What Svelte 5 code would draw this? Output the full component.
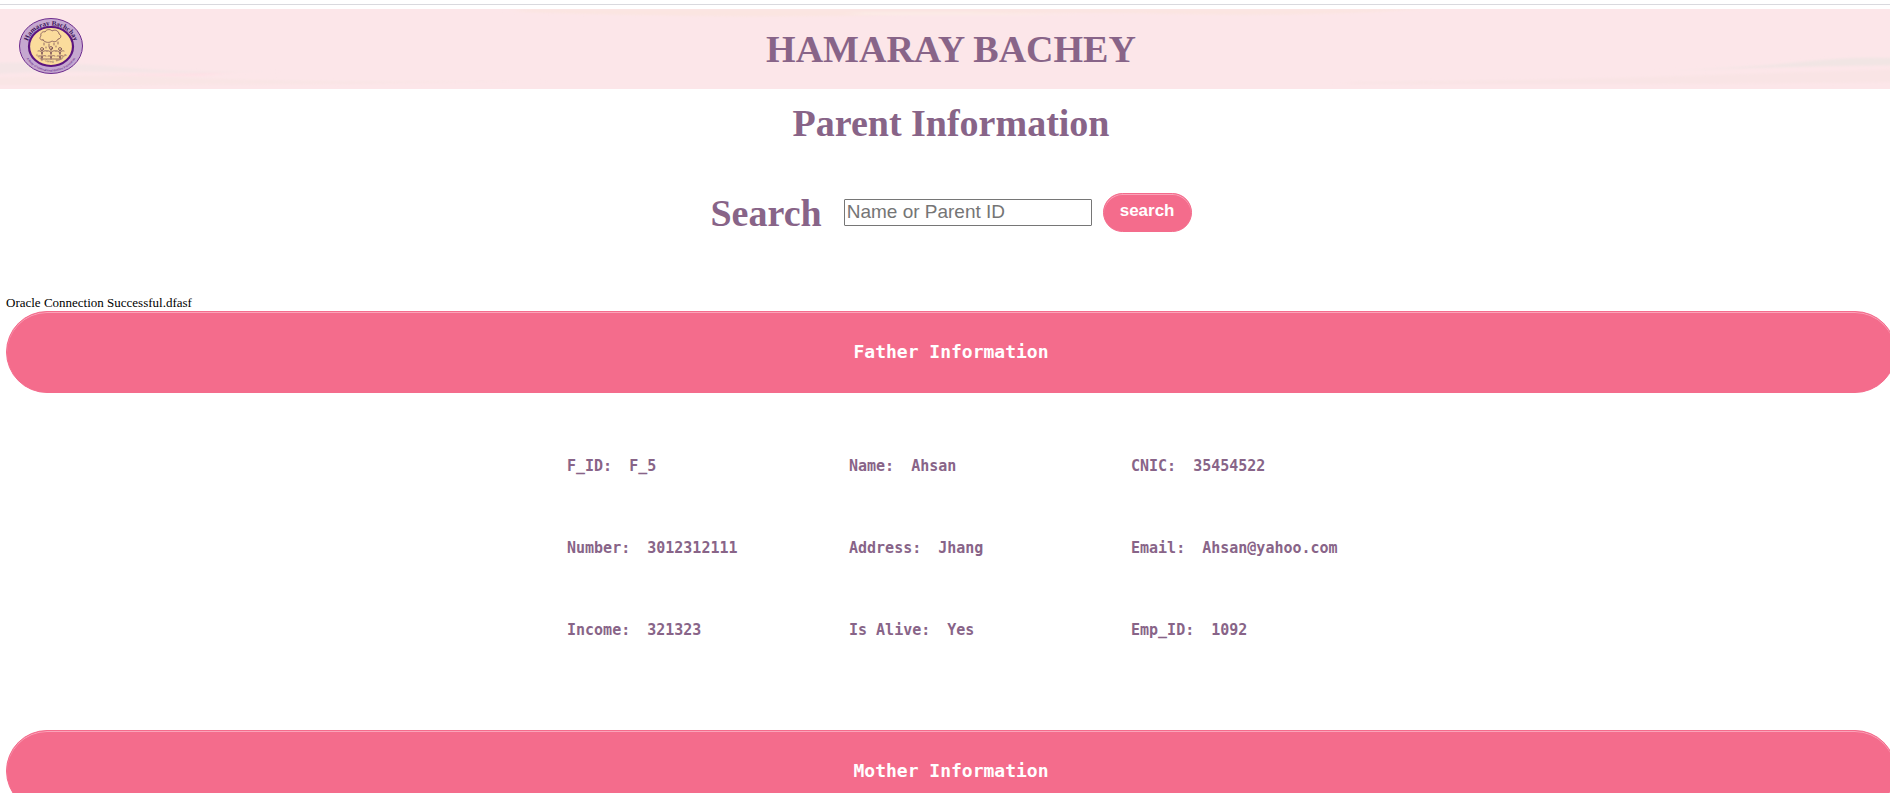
<script>
  const father = [
    { label: 'F_ID', value: 'F_5' },
    { label: 'Name', value: 'Ahsan' },
    { label: 'CNIC', value: '35454522' },
    { label: 'Number', value: '3012312111' },
    { label: 'Address', value: 'Jhang' },
    { label: 'Email', value: 'Ahsan@yahoo.com' },
    { label: 'Income', value: '321323' },
    { label: 'Is Alive', value: 'Yes' },
    { label: 'Emp_ID', value: '1092' }
  ];
  let query = $state('');
</script>

<div class="page">
  <header class="banner">
    <svg class="waves" viewBox="0 0 1890 80" preserveAspectRatio="none" aria-hidden="true">
      <defs>
        <filter id="soft" x="-10%" y="-50%" width="120%" height="200%">
          <feGaussianBlur stdDeviation="8 1" />
        </filter>
      </defs>
      <g filter="url(#soft)">
        <path d="M520 0H1430Q1300 8 1180 5T900 6T520 3Z" fill="#fbe5e1" />
        <path d="M860 3H960L1090 6H850Z" fill="#fcebe6" />
        <path d="M-20 54Q60 52 120 58T270 62Q200 65 120 63T-20 66Z" fill="#f4e5e6" />
        <path d="M-20 70Q80 64 200 69T540 72Q360 76 -20 76Z" fill="#f9e5e5" />
        <path d="M100 66L230 64L200 67Z" fill="#ffdfe5" />
        <path d="M1660 62Q1760 58 1810 52T1910 50V56Q1800 57 1660 62Z" fill="#f1e5e4" />
        <path d="M1350 73Q1560 71 1680 67T1910 60V73Q1700 76 1350 75Z" fill="#f9e4e5" />
      </g>
    </svg>
    <svg class="logo" viewBox="0 0 64 56" role="img" aria-label="Hamaray Bachey logo">
      <defs>
        <path id="arc-top" d="M8.500 28A23.500 20.500 0 0 1 55.500 28" />
        <path id="arc-bottom" d="M4 28A28 25.500 0 0 0 60 28" />
        <path id="arc-inner" d="M14 28A18 16.500 0 0 0 50 28" />
      </defs>
      <ellipse cx="32" cy="28" rx="31.500" ry="27.500" fill="#c5a8d0" stroke="#6d2c8e" />
      <ellipse cx="32" cy="28.500" rx="22" ry="19.500" fill="#fbdc9c" stroke="#5c1580" stroke-width="2.200" />
      <g fill="none" stroke="#6b4050" stroke-width=".7" stroke-linecap="round">
        <path d="M24 22c-3 .5-4-2-2-4c-1-3 2-5 4-4c1-3 6-3 7-1c3-2 7 0 7 3c3 1 2 5-1 5c-1 3-4 3-6 2c-2 2-7 2-9-1Z" />
        <path d="M25 25v2M30 26v3M35 25v2M39 24v2M27 29v1M33 30v1M37 28v1" />
        <path d="M23 40v-8M32 41v-10M41 40v-8M19 33c3-1 4 2 4 3c0-2 2-4 5-3M28 33c3-1 4 2 4 3c0-2 2-4 5-3M37 33c2-1 4 2 4 3c0-2 2-4 4-3" />
        <path d="M20 38c2-1 3 1 3 2c0-2 2-3 4-2M29 38c2-1 3 1 3 2c0-2 2-3 4-2M38 38c2-1 3 1 3 2c0-2 1-3 3-2M22 41h20" />
        <circle cx="23" cy="31" r="1.500" />
        <circle cx="32" cy="30" r="1.500" />
        <circle cx="41" cy="31" r="1.500" />
      </g>
      <text class="seal-name"><textPath href="#arc-top" startOffset="50%" text-anchor="middle">Hamaray Bachchay</textPath></text>
      <text class="seal-motto"><textPath href="#arc-inner" startOffset="50%" text-anchor="middle">Loving · Caring · Nurturing</textPath></text>
      <text class="seal-org"><textPath href="#arc-bottom" startOffset="50%" text-anchor="middle">A Body of International Welfare Foundation</textPath></text>
    </svg>
    <h1>HAMARAY BACHEY</h1>
  </header>

  <main>
    <h2>Parent Information</h2>

    <form class="search" onsubmit={(e) => e.preventDefault()}>
      <label for="query">Search</label>
      <input id="query" type="text" placeholder="Name or Parent ID" bind:value={query} />
      <button type="submit">search</button>
    </form>

    <p class="status">Oracle Connection Successful.dfasf</p>

    <h3 class="bar">Father Information</h3>
    <dl class="details">
      {#each father as item}
        <div class="item">
          <dt>{item.label}:</dt>
          <dd>{item.value}</dd>
        </div>
      {/each}
    </dl>

    <h3 class="bar">Mother Information</h3>
  </main>
</div>

<style>
  :global(body) {
    background: #fff;
  }

  .page {
    height: 100vh;
    overflow: hidden;
    padding-top: 4px;
    box-sizing: border-box;
    font-family: "Liberation Serif", "Times New Roman", serif;
    color: #000;
  }

  .banner {
    position: relative;
    height: 80px;
    border-top: 1px solid #d9d9de;
    padding-top: 4px;
    background: #fce6e9 content-box;
  }

  .waves {
    position: absolute;
    left: 0;
    top: 4px;
    width: 100%;
    height: 80px;
  }

  .logo {
    position: absolute;
    left: 19px;
    top: 13px;
    width: 64px;
    height: 56px;
  }

  .seal-name {
    font: bold 7px "Liberation Serif", serif;
    fill: #3a1458;
  }

  .seal-motto {
    font: 3px "Liberation Sans", sans-serif;
    fill: #6b4050;
  }

  .seal-org {
    font: 3px "Liberation Sans", sans-serif;
    fill: #5c1580;
  }

  h1,
  h2,
  .search label {
    margin: 0;
    font-size: 38px;
    font-weight: bold;
    line-height: 44px;
    text-align: center;
    color: #886488;
  }

  h1 {
    position: relative;
    width: 100%;
    margin-left: 6px;
    padding-top: 18px;
  }

  main {
    width: 100%;
    margin-left: 6px;
  }

  h2 {
    padding-top: 12px;
  }

  .search {
    display: flex;
    justify-content: center;
    align-items: center;
    margin-top: 44px;
  }

  .search label {
    padding-top: 2px;
    margin-right: 22px;
  }

  .search input {
    box-sizing: border-box;
    width: 248px;
    height: 27px;
    margin-right: 11px;
    padding: 1px 2px;
    border: 1px solid #767676;
    border-radius: 1px;
    font: 19px "Liberation Sans", Arial, sans-serif;
  }

  .search input::placeholder {
    color: #757575;
  }

  .search button,
  .bar {
    border: 1px solid #f46c8c;
    background: #f46c8c;
    box-shadow: inset 0 1px 0 #fba3b9;
    color: #fff;
  }

  .search button {
    height: 39px;
    padding: 0 16px 2px;
    border-radius: 20px;
    font: bold 17px "Liberation Sans", Arial, sans-serif;
    cursor: pointer;
  }

  .status {
    margin: 60px 0 0;
    font-size: 13px;
    line-height: 16px;
  }

  .bar {
    box-sizing: border-box;
    margin: 0;
    padding: 29px 0;
    border-radius: 41px;
    font: bold 18px/22px "DejaVu Sans Mono", Consolas, monospace;
    text-align: center;
  }

  .details {
    display: grid;
    grid-template-columns: 282px 282px 204px;
    justify-content: center;
    row-gap: 62px;
    margin: 0;
    padding: 63px 0 90px;
    font: bold 15px/20px "DejaVu Sans Mono", Consolas, monospace;
    color: #886488;
  }

  .item {
    display: flex;
    gap: 17px;
    white-space: nowrap;
  }

  dd {
    margin: 0;
  }
</style>
